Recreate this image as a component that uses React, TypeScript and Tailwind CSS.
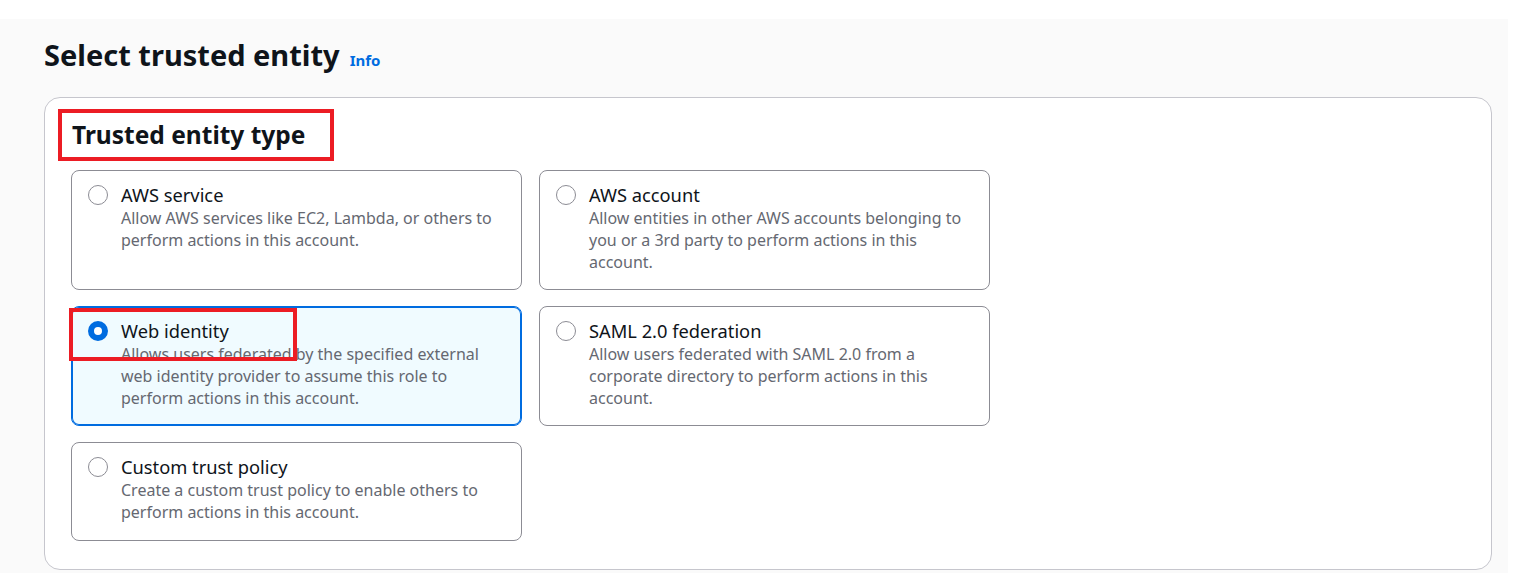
const options = [
  {
    title: "AWS service",
    desc: "Allow AWS services like EC2, Lambda, or others to perform actions in this account.",
  },
  {
    title: "AWS account",
    desc: "Allow entities in other AWS accounts belonging to you or a 3rd party to perform actions in this account.",
  },
  {
    title: "Web identity",
    desc: "Allows users federated by the specified external web identity provider to assume this role to perform actions in this account.",
    selected: true,
  },
  {
    title: "SAML 2.0 federation",
    desc: "Allow users federated with SAML 2.0 from a corporate directory to perform actions in this account.",
  },
  {
    title: "Custom trust policy",
    desc: "Create a custom trust policy to enable others to perform actions in this account.",
  },
];

function Radio({ checked }: { checked?: boolean }) {
  return checked ? (
    <span className="mt-[2px] block w-[20px] h-[20px] shrink-0 rounded-full border-[6px] border-[#006ce0] bg-white" />
  ) : (
    <span className="mt-[2px] block w-[20px] h-[20px] shrink-0 rounded-full border-[1.5px] border-[#8c8c94] bg-white" />
  );
}

function OptionCard({ title, desc, selected }: { title: string; desc: string; selected?: boolean }) {
  return (
    <div
      className={
        selected
          ? "relative rounded-lg border border-[#006ce0] ring-1 ring-inset ring-[#006ce0] bg-[#f0fbff] pl-[16px] pr-[20px] pt-[12px] pb-[14px]"
          : "relative rounded-lg border border-[#8c8c94] bg-white pl-[16px] pr-[20px] pt-[12px] pb-[14px]"
      }
    >
      <div className="flex gap-[13px]">
        <Radio checked={selected} />
        <div>
          <div className="text-[18.3px] leading-[24px] text-[#0f141a]">{title}</div>
          <div className="text-[16px] leading-[22px] text-[#656871]">{desc}</div>
        </div>
      </div>
      {selected && (
        <span className="absolute left-[-3px] top-[1px] w-[228px] h-[53px] border-[4px] border-[#ec1c24]" />
      )}
    </div>
  );
}

export default function App() {
  return (
    <div className="bg-white min-h-screen pt-[19px] font-['Noto_Sans',sans-serif]">
      <div className="w-[1508px] bg-[#fafafa] pl-[44px] pr-[16px] pt-[16px] pb-[3px]">
        <div className="flex items-baseline gap-[10px]">
          <h1 className="text-[29px] leading-[40px] font-bold text-[#0f141a]">Select trusted entity</h1>
          <a className="text-[15px] font-bold text-[#006ce0]">Info</a>
        </div>
        <div className="mt-[22px] rounded-2xl border border-[#c6c6cd] bg-white pl-[26px] pr-[26px] pt-[11px] pb-[28px]">
          <div className="relative inline-block pl-[1px] py-[10px]">
            <h2 className="text-[24.5px] leading-[32px] font-bold text-[#0f141a]">Trusted entity type</h2>
            <span className="absolute left-[-13px] right-[-29px] top-0 bottom-0 border-[4px] border-[#ec1c24]" />
          </div>
          <div className="mt-[9px] grid grid-cols-[451px_451px] gap-x-[17px] gap-y-[16px]">
            <div className="h-[120px] grid">
              <OptionCard {...options[0]} />
            </div>
            <div className="h-[120px] grid">
              <OptionCard {...options[1]} />
            </div>
            <div className="h-[120px] grid">
              <OptionCard {...options[2]} />
            </div>
            <div className="h-[120px] grid">
              <OptionCard {...options[3]} />
            </div>
            <div className="h-[99px] grid">
              <OptionCard {...options[4]} />
            </div>
          </div>
        </div>
      </div>
    </div>
  );
}
